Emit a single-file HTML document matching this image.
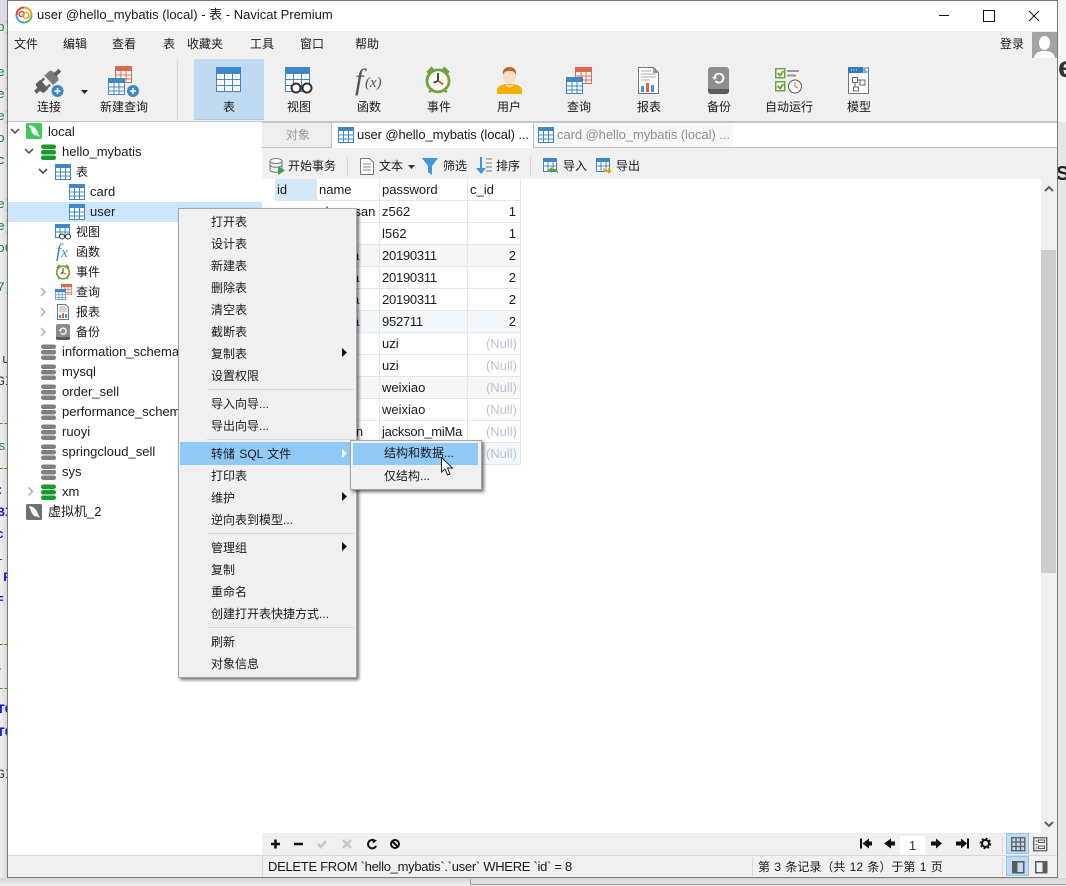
<!DOCTYPE html>
<html><head><meta charset="utf-8"><style>
html,body{margin:0;padding:0;width:1066px;height:886px;overflow:hidden;background:#e4e4e4}
body{position:relative;font:13px/20px "Liberation Sans","Noto Sans CJK SC",sans-serif;color:#1a1a1a}
.a,.t,svg.i{position:absolute}
.t{white-space:nowrap;line-height:20px}
.c{transform:translateX(-50%)}
.z{font-size:12px}
.m{font-size:12px;color:#1a1a1a}
.f{position:absolute;font:13px/16px "Liberation Mono",monospace;white-space:nowrap}
.b{font-weight:bold}
.g{position:absolute;border-right:1px solid #e6e6e6;border-bottom:1px solid #e6e6e6;box-sizing:border-box;height:22px;line-height:21px;padding-left:2px;overflow:hidden;white-space:nowrap}
.d{letter-spacing:-.25px}
.r{text-align:right;padding:0 4px 0 0}
.n{color:#bcc3d0;padding-right:3px}
.s{position:absolute;left:207px;width:147px;height:1px;background:#d8d8d8}
</style></head><body>
<svg width="0" height="0" style="position:absolute"><defs>
<symbol id="tb" viewBox="0 0 16 16"><rect x=".5" y=".5" width="15" height="15" fill="#fff" stroke="#3f87c6"/><rect width="16" height="4" fill="#3f87c6"/><path d="M0 8h16M0 12h16M5.500 4v12M10.500 4v12" stroke="#3f87c6"/></symbol>
<symbol id="db" viewBox="0 0 15 16"><rect x="0" y="0.500" width="15" height="4.500" rx="2.200" fill="currentColor"/><rect x="0" y="6" width="15" height="4.500" rx="2.200" fill="currentColor"/><rect x="0" y="11.500" width="15" height="4.500" rx="2.200" fill="currentColor"/></symbol>
<symbol id="tbl" viewBox="0 0 25 25"><rect x=".5" y=".5" width="24" height="24" fill="#fff" stroke="#3f87c6"/><rect width="25" height="7" fill="#3f87c6"/><path d="M0 12.500h25M0 18.500h25M8.500 7v18M16.500 7v18" stroke="#3f87c6"/></symbol>
<symbol id="sq" viewBox="0 0 17 17"><rect x=".5" y=".5" width="16" height="16" fill="#fff" stroke="#de6a4b"/><rect width="17" height="5" fill="#de6a4b"/><path d="M0 9h17M0 13h17M6 5v12M11 5v12" stroke="#de6a4b"/></symbol>
<symbol id="qr" viewBox="0 0 17 17"><rect x=".5" y=".5" width="16" height="16" fill="#fff" stroke="#3f87c6"/><rect width="17" height="5" fill="#3f87c6"/><path d="M0 9h17M0 13h17M6 5v12M11 5v12" stroke="#3f87c6"/></symbol>
<symbol id="ck" viewBox="0 0 16 16"><path d="M2 4l3-3M14 4l-3-3" stroke="#6fa43c" stroke-width="2"/><circle cx="8" cy="8.500" r="6.300" fill="#fdfbf3" stroke="#6fa43c" stroke-width="1.600"/><path d="M8 4v4.500l-2.500 1" stroke="#333" fill="none"/><path d="M8 8.500l3 2" stroke="#d9543b"/><path d="M3 15l2-2M13 15l-2-2" stroke="#6fa43c" stroke-width="1.500"/></symbol>
<symbol id="rp" viewBox="0 0 16 16"><path d="M2.500.5h8l3 3v12h-11z" fill="#fff" stroke="#777"/><path d="M4 3h6M4 5h8M4 7h8" stroke="#aaa"/><rect x="4" y="11" width="2" height="3" fill="#3f97dc"/><rect x="7" y="9" width="2" height="5" fill="#e8603c"/><rect x="10" y="10" width="2" height="4" fill="#3f97dc"/></symbol>
<symbol id="bk" viewBox="0 0 16 16"><rect x="1" width="14" height="16" rx="2" fill="#8c8c8c"/><path d="M1 13h14v1a2 2 0 0 1-2 2H3a2 2 0 0 1-2-2z" fill="#5b5b5b"/><path d="M5.200 6.500a3 3 0 1 1 .6 2.500" fill="none" stroke="#fff" stroke-width="1.300"/><path d="M3.500 6h3.500l-1.700 2z" fill="#fff"/></symbol>
<symbol id="dol" viewBox="0 0 16 16"><rect width="16" height="16" rx="1.500" fill="currentColor"/><path d="M3 2.500c3-.5 5 1 6.500 3 1.500 1.500 2.500 3 2.500 5 .5 1 1.500 2 2 3-1.500 0-2.500-.5-3.500-1.500-.5.500-1.500.5-2.500 0C6 10 5 7.500 4.500 5 3.500 4.500 3 3.500 3 2.500z" fill="#fff"/></symbol>
<symbol id="imp" viewBox="0 0 16 16"><rect x=".5" y=".5" width="13" height="13" fill="#fff" stroke="#3f87c6"/><rect width="14" height="4" fill="#3f87c6"/><path d="M0 8h14M5 4v10M10 4v10" stroke="#3f87c6"/></symbol>
</defs></svg>

<!-- background fragments left -->
<div class="a" style="left:0;top:0;width:7px;height:886px;background:linear-gradient(to right,#f1f1f1,#d9d9d9);overflow:hidden">
<div class="a" style="left:0;top:0;width:7px;height:24px;background:#dcdce8"></div>
<span class="f" style="left:-3px;top:20px;color:#1f7a3c">p]</span>
<span class="f" style="left:-3px;top:65px;color:#1f7a3c">e]</span>
<span class="f" style="left:-3px;top:87px;color:#1f7a3c">e]</span>
<span class="f" style="left:-3px;top:109px;color:#1f7a3c">e]</span>
<span class="f" style="left:-3px;top:131px;color:#1f7a3c">o:</span>
<span class="f" style="left:-3px;top:153px;color:#1f7a3c">c]</span>
<span class="f" style="left:-3px;top:197px;color:#1f7a3c">e]</span>
<span class="f" style="left:-3px;top:219px;color:#1f7a3c">e]</span>
<span class="f" style="left:-3px;top:241px;color:#1f7a3c">oC</span>
<span class="f" style="left:-3px;top:280px;color:#1f7a3c">7]</span>
<span class="f" style="left:2px;top:352px;color:#333">u</span>
<span class="f" style="left:-3px;top:374px;color:#333">GI</span>
<div class="a" style="left:0;top:423px;width:7px;border-top:1px dashed #3a8f3a"></div>
<span class="f" style="left:-2px;top:439px;color:#2a7f78">st</span>
<div class="a" style="left:0;top:468px;width:7px;border-top:1px dashed #3a8f3a"></div>
<span class="f b" style="left:-4px;top:483px;color:#1a1ae0">:</span>
<span class="f b" style="left:-3px;top:505px;color:#1a1ae0">BI</span>
<span class="f b" style="left:-4px;top:527px;color:#1a1ae0">c</span>
<span class="f" style="left:-5px;top:549px;color:#333">l</span>
<span class="f b" style="left:3px;top:570px;color:#1a1ae0">F</span>
<span class="f b" style="left:-4px;top:592px;color:#1a1ae0">=</span>
<div class="a" style="left:0;top:644px;width:7px;border-top:1px dashed #3a8f3a"></div>
<span class="f" style="left:-6px;top:660px;color:#2a7f78">s</span>
<div class="a" style="left:0;top:688px;width:7px;border-top:1px dashed #3a8f3a"></div>
<span class="f b" style="left:-3px;top:702px;color:#1a1ae0">TO</span>
<span class="f b" style="left:-3px;top:725px;color:#1a1ae0">TO</span>
<span class="f" style="left:-3px;top:767px;color:#333">GI</span>
</div>
<!-- right side -->
<div class="a" style="left:1058px;top:0;width:8px;height:886px;background:#e6e6e6;overflow:hidden">
<div class="a" style="left:0;top:0;width:8px;height:122px;background:#f6f6f6"></div>
<span class="a" style="left:0;top:50px;font:bold 30px/36px 'Liberation Sans',sans-serif;color:#333">e</span>
<span class="a" style="left:-2px;top:164px;font:bold 20px/20px 'Liberation Sans',sans-serif;color:#222">S</span>
</div>
<div class="a" style="left:0;top:878px;width:1066px;height:8px;background:linear-gradient(#d4d4d4,#f2f2f2)"></div>
<div class="a" style="left:470px;top:879px;width:596px;height:6px;border-left:1px solid #999;border-bottom:1px solid #999;box-sizing:border-box"></div>

<!-- window -->
<div class="a" id="w" style="left:7px;top:0;width:1051px;height:878px;background:#f0f0f0;border:1px solid #7a7a7a;box-sizing:border-box"></div>
<div class="a" style="left:8px;top:1px;width:1049px;height:30px;background:#fff"></div>
<!-- app logo -->
<svg class="i" style="left:15px;top:6px" width="18" height="18" viewBox="0 0 18 18"><path d="M9 1.500a7.500 7.500 0 0 1 7.500 7.500" fill="none" stroke="#e8a21f" stroke-width="2"/><path d="M9 1.500A7.500 7.500 0 0 0 1.500 9" fill="none" stroke="#dd4b39" stroke-width="2"/><path d="M1.500 9A7.500 7.500 0 0 0 9 16.500" fill="none" stroke="#3ea6e0" stroke-width="2"/><path d="M9 16.500A7.500 7.500 0 0 0 16.500 9" fill="none" stroke="#5cb85c" stroke-width="2"/><circle cx="6.500" cy="8" r="2.500" fill="none" stroke="#dd4b39" stroke-width="1.500"/><circle cx="11" cy="9.500" r="3" fill="none" stroke="#e8a21f" stroke-width="1.500"/></svg>
<span class="t" style="left:37px;top:5px">user @hello_mybatis (local) - 表 - Navicat Premium</span>
<!-- window controls -->
<div class="a" style="left:939px;top:15px;width:10px;height:1px;background:#111"></div>
<div class="a" style="left:983px;top:10px;width:10px;height:10px;border:1px solid #111"></div>
<svg class="i" style="left:1028px;top:10px" width="12" height="12"><path d="M1 1l10 10M11 1L1 11" stroke="#111" fill="none"/></svg>

<!-- menu -->
<span class="t m" style="left:14px;top:34px">文件</span><span class="t m" style="left:63px;top:34px">编辑</span><span class="t m" style="left:112px;top:34px">查看</span><span class="t m" style="left:163px;top:34px">表</span><span class="t m" style="left:187px;top:34px">收藏夹</span><span class="t m" style="left:250px;top:34px">工具</span><span class="t m" style="left:300px;top:34px">窗口</span><span class="t m" style="left:355px;top:34px">帮助</span><span class="t m" style="left:1000px;top:34px">登录</span>
<svg class="i" style="left:1032px;top:32px" width="25" height="26" viewBox="0 0 25 26"><rect width="25" height="26" fill="#a3a3a3"/><ellipse cx="12.500" cy="11" rx="5.500" ry="7" fill="#fff"/><path d="M2 26c1-6 6-7 10.500-7S22 20 23 26z" fill="#fff"/></svg>

<!-- toolbar -->
<div class="a" style="left:177px;top:60px;width:1px;height:60px;background:#d6d6d6"></div>
<div class="a" style="left:194px;top:59px;width:70px;height:61px;background:#bfdaf1;border-bottom:1px solid #a9cde9;box-sizing:border-box"></div>
<!-- plug -->
<svg class="i" style="left:32px;top:66px" width="34" height="32" viewBox="0 0 34 32"><g transform="rotate(-42 16 15)" fill="#606060"><rect x="-1" y="13" width="7" height="4"/><path d="M5 9h6v12H5c-2-1-2-11 0-12z"/><rect x="11" y="9.500" width="4" height="2.300"/><rect x="11" y="18" width="4" height="2.300"/><path d="M17 8.500h7c3 1 3 12 0 13h-7z" fill="#7b7b7b"/><rect x="25" y="13" width="7" height="4"/></g><circle cx="25.500" cy="25" r="6" fill="#3f87c6"/><path d="M22.500 25h6M25.500 22v6" stroke="#fff" stroke-width="1.500"/></svg>
<svg class="i" style="left:81px;top:90px" width="7" height="4"><path d="M0 0h7L3.500 4z" fill="#222"/></svg>
<!-- new query -->
<svg class="i" style="left:108px;top:66px" width="32" height="32"><use href="#sq" x="7" y="0" width="17" height="17"/><use href="#qr" x="0" y="12" width="17" height="17"/><circle cx="25" cy="25" r="6" fill="#3f87c6"/><path d="M22 25h6M25 22v6" stroke="#fff" stroke-width="1.500"/></svg>
<svg class="i" style="left:216px;top:67px" width="26" height="26"><use href="#tbl" width="25" height="25"/></svg>
<!-- view -->
<svg class="i" style="left:285px;top:67px" width="29" height="28" viewBox="0 0 29 28"><use href="#tbl" width="25" height="25"/><circle cx="11" cy="21" r="4.500" fill="#fff" stroke="#333" stroke-width="2"/><circle cx="22" cy="21" r="4.500" fill="#fff" stroke="#333" stroke-width="2"/><path d="M15 20h3" stroke="#333" stroke-width="2"/></svg>
<span class="a" style="left:355px;top:63px;font:italic 30px/34px 'Liberation Serif',serif;color:#555">f</span><span class="a" style="left:365px;top:74px;font:italic 15px/18px 'Liberation Serif',serif;color:#555">(x)</span>
<svg class="i" style="left:424px;top:66px" width="28" height="28"><use href="#ck" width="28" height="28"/></svg>
<!-- user -->
<svg class="i" style="left:497px;top:66px" width="25" height="28" viewBox="0 0 25 28"><path d="M0 28v-4c0-4 5-5 8-6h9c3 1 8 2 8 6v4z" fill="#f4b000"/><ellipse cx="12.500" cy="9.500" rx="6.500" ry="8.500" fill="#f9dcc6"/><path d="M6 9C5 3 9 1 12.500 1S20 3 19 9c-1-3-3-4-6.500-4S7 6 6 9z" fill="#b96a31"/><path d="M9 17c1 3 6 3 7 0v3c-2 2-5 2-7 0z" fill="#f0cdb3"/></svg>
<!-- query -->
<svg class="i" style="left:566px;top:67px" width="27" height="27"><use href="#sq" x="9" y="0" width="17" height="17"/><use href="#qr" x="0" y="10" width="17" height="17"/></svg>
<svg class="i" style="left:638px;top:67px" width="21" height="27" viewBox="0 0 21 27"><path d="M.5.500h15l5 5v21H.5z" fill="#fff" stroke="#777"/><path d="M15 .5l5.500 5.500H15z" fill="#999"/><path d="M3 4h10M3 7h15M3 10h15M3 13h9" stroke="#aaa"/><rect x="3" y="19" width="3" height="6" fill="#3f97dc"/><rect x="8" y="16" width="3" height="9" fill="#e8603c"/><rect x="13" y="18" width="3" height="7" fill="#3f97dc"/></svg>
<svg class="i" style="left:708px;top:67px" width="21" height="27" viewBox="0 0 21 27"><rect width="21" height="27" rx="3" fill="#8e8e8e"/><path d="M0 22h21v2a3 3 0 0 1-3 3H3a3 3 0 0 1-3-3z" fill="#5b5b5b"/><path d="M6.500 10.500a4.500 4.500 0 1 1 1 3.500" fill="none" stroke="#fff" stroke-width="1.800"/><path d="M4 10h5l-2.500 3z" fill="#fff"/></svg>
<!-- autorun -->
<svg class="i" style="left:775px;top:68px" width="29" height="27" viewBox="0 0 29 27"><rect x=".75" y=".75" width="9" height="9" fill="#fff" stroke="#6fa43c" stroke-width="1.500"/><path d="M2.500 5l2.500 2.500L8.500 3" fill="none" stroke="#6fa43c" stroke-width="2"/><rect x=".75" y="13.750" width="9" height="9" fill="#fff" stroke="#6fa43c" stroke-width="1.500"/><path d="M2.500 18l2.500 2.500L8.500 16" fill="none" stroke="#6fa43c" stroke-width="2"/><path d="M12 3h12M12 7.500h9" stroke="#999" stroke-width="2"/><circle cx="20" cy="18.500" r="6.500" fill="#fff" stroke="#555"/><path d="M20 14v4.500l3 1.500" fill="none" stroke="#e8603c"/></svg>
<!-- model -->
<svg class="i" style="left:848px;top:67px" width="21" height="27" viewBox="0 0 21 27"><path d="M.5 1h20v25.500H.5z" fill="#fff" stroke="#777"/><path d="M0 0h15l6 6H0z" fill="#2f7ab8"/><path d="M15 0l6 6h-6z" fill="#7fb6e0"/><path d="M3 3h1M5.500 3h1M8 3h1" stroke="#fff"/><path d="M4.500 10.500h5v5h-5zM12 13h5v5h-5zM5.500 20h5v4h-5z" fill="none" stroke="#666"/><path d="M7 15.500V20M9.500 13H12" stroke="#666"/></svg>
<span class="t c z" style="left:49px;top:97px">连接</span>
<span class="t c z" style="left:124px;top:97px">新建查询</span>
<span class="t c z" style="left:229px;top:97px">表</span>
<span class="t c z" style="left:299px;top:97px">视图</span>
<span class="t c z" style="left:369px;top:97px">函数</span>
<span class="t c z" style="left:439px;top:97px">事件</span>
<span class="t c z" style="left:509px;top:97px">用户</span>
<span class="t c z" style="left:579px;top:97px">查询</span>
<span class="t c z" style="left:649px;top:97px">报表</span>
<span class="t c z" style="left:719px;top:97px">备份</span>
<span class="t c z" style="left:789px;top:97px">自动运行</span>
<span class="t c z" style="left:859px;top:97px">模型</span>
<div class="a" style="left:8px;top:121px;width:1049px;height:2px;background:#c6c6c6"></div>

<!-- tree -->
<div class="a" style="left:8px;top:122px;width:254px;height:733px;background:#fff"></div>
<div class="a" style="left:8px;top:202px;width:254px;height:20px;background:#cce6fb"></div>
<svg class="i" style="left:0;top:122px" width="110" height="240" viewBox="0 0 110 240" fill="none" stroke="#555" stroke-width="1.600"><path d="M11 7l4 4 4-4M25 27l4 4 4-4M39 47l4 4 4-4"/><g stroke="#b5b5b5"><path d="M41 166l4 4-4 4M41 186l4 4-4 4M41 206l4 4-4 4"/></g></svg>
<svg class="i" style="left:26px;top:123px;color:#3fca5a" width="16" height="16"><use href="#dol" width="16" height="16"/></svg>
<svg class="i" style="left:41px;top:144px;color:#179a2d" width="15" height="16"><use href="#db" width="15" height="16"/></svg>
<svg class="i" style="left:55px;top:164px" width="16" height="16"><use href="#tb" width="16" height="16"/></svg>
<svg class="i" style="left:69px;top:184px" width="16" height="16"><use href="#tb" width="16" height="16"/></svg>
<svg class="i" style="left:69px;top:204px" width="16" height="16"><use href="#tb" width="16" height="16"/></svg>
<svg class="i" style="left:55px;top:224px" width="17" height="16" viewBox="0 0 17 16"><rect x=".5" y=".5" width="14" height="13" fill="#fff" stroke="#3f87c6"/><rect width="15" height="4" fill="#3f87c6"/><path d="M0 8h15M5 4v10M10 4v10" stroke="#3f87c6"/><circle cx="7" cy="12.500" r="2.500" fill="#fff" stroke="#333"/><circle cx="13" cy="12.500" r="2.500" fill="#fff" stroke="#333"/></svg>
<span class="a" style="left:56px;top:242px;font:italic 19px/20px 'Liberation Serif',serif;color:#3f87c6">f<span style="font-size:15px">x</span></span>
<svg class="i" style="left:55px;top:264px" width="16" height="16"><use href="#ck" width="16" height="16"/></svg>
<svg class="i" style="left:55px;top:284px" width="17" height="17"><use href="#sq" x="6" y="0" width="11" height="11"/><use href="#qr" x="0" y="5" width="11" height="11"/></svg>
<svg class="i" style="left:55px;top:304px" width="16" height="16"><use href="#rp" width="16" height="16"/></svg>
<svg class="i" style="left:55px;top:324px" width="16" height="16"><use href="#bk" width="16" height="16"/></svg>
<svg class="i" style="left:41px;top:344px;color:#808080" width="15" height="16"><use href="#db" width="15" height="16"/></svg>
<svg class="i" style="left:41px;top:364px;color:#808080" width="15" height="16"><use href="#db" width="15" height="16"/></svg>
<svg class="i" style="left:41px;top:384px;color:#808080" width="15" height="16"><use href="#db" width="15" height="16"/></svg>
<svg class="i" style="left:41px;top:404px;color:#808080" width="15" height="16"><use href="#db" width="15" height="16"/></svg>
<svg class="i" style="left:41px;top:424px;color:#808080" width="15" height="16"><use href="#db" width="15" height="16"/></svg>
<svg class="i" style="left:41px;top:444px;color:#808080" width="15" height="16"><use href="#db" width="15" height="16"/></svg>
<svg class="i" style="left:41px;top:464px;color:#808080" width="15" height="16"><use href="#db" width="15" height="16"/></svg>
<svg class="i" style="left:27px;top:486px" width="8" height="12"><path d="M1.500 1.500l4 4-4 4" fill="none" stroke="#b5b5b5" stroke-width="1.600"/></svg>
<svg class="i" style="left:41px;top:484px;color:#179a2d" width="15" height="16"><use href="#db" width="15" height="16"/></svg>
<svg class="i" style="left:26px;top:504px;color:#707070" width="16" height="16"><use href="#dol" width="16" height="16"/></svg>
<span class="t" style="left:48px;top:122px">local</span>
<span class="t" style="left:62px;top:142px">hello_mybatis</span>
<span class="t z" style="left:76px;top:162px">表</span>
<span class="t" style="left:90px;top:182px">card</span>
<span class="t" style="left:90px;top:202px">user</span>
<span class="t z" style="left:76px;top:222px">视图</span>
<span class="t z" style="left:76px;top:242px">函数</span>
<span class="t z" style="left:76px;top:262px">事件</span>
<span class="t z" style="left:76px;top:282px">查询</span>
<span class="t z" style="left:76px;top:302px">报表</span>
<span class="t z" style="left:76px;top:322px">备份</span>
<span class="t" style="left:62px;top:342px">information_schema</span>
<span class="t" style="left:62px;top:362px">mysql</span>
<span class="t" style="left:62px;top:382px">order_sell</span>
<span class="t" style="left:62px;top:402px">performance_schema</span>
<span class="t" style="left:62px;top:422px">ruoyi</span>
<span class="t" style="left:62px;top:442px">springcloud_sell</span>
<span class="t" style="left:62px;top:462px">sys</span>
<span class="t" style="left:62px;top:482px">xm</span>
<span class="t" style="left:48px;top:502px">虚拟机_2</span>

<!-- tabs -->
<div class="a" style="left:262px;top:123px;width:795px;height:25px;background:#fff;border-bottom:1px solid #c2c2c2;box-sizing:border-box"></div>
<div class="a" style="left:262px;top:123px;width:69px;height:24px;background:#eee"></div>
<div class="a" style="left:331px;top:123px;width:203px;height:25px;background:#fff;border-left:1px solid #c2c2c2;border-right:1px solid #c2c2c2;box-sizing:border-box"></div>
<div class="a" style="left:534px;top:123px;width:199px;height:24px;background:#f7f7f7"></div>
<span class="t z" style="left:286px;top:125px;color:#9a9a9a">对象</span>
<svg class="i" style="left:338px;top:127px" width="16" height="16"><use href="#tb" width="16" height="16"/></svg>
<span class="t" style="left:357px;top:125px;letter-spacing:-.1px">user @hello_mybatis (local) ...</span>
<svg class="i" style="left:538px;top:127px" width="16" height="16"><use href="#tb" width="16" height="16"/></svg>
<span class="t" style="left:557px;top:125px;color:#8f8f8f;letter-spacing:-.07px">card @hello_mybatis (local) ...</span>

<!-- toolbar 2 -->
<svg class="i" style="left:269px;top:158px" width="17" height="17" viewBox="0 0 17 17"><ellipse cx="7" cy="3" rx="6" ry="2.500" fill="#fff" stroke="#777"/><path d="M1 3v9c0 3 12 3 12 0V3M1 7c0 3 12 3 12 0" fill="none" stroke="#777"/><path d="M9 8l7 4.500-7 4.500z" fill="#3aa655"/></svg>
<span class="t z" style="left:288px;top:156px">开始事务</span>
<div class="a" style="left:347px;top:157px;width:1px;height:19px;background:#d6d6d6"></div>
<svg class="i" style="left:360px;top:158px" width="14" height="17" viewBox="0 0 14 17"><path d="M.5.500h9l4 4v12H.5z" fill="#fff" stroke="#777"/><path d="M3 6h8M3 9h8M3 12h8" stroke="#888"/></svg>
<span class="t z" style="left:379px;top:156px">文本</span>
<svg class="i" style="left:408px;top:165px" width="7" height="4"><path d="M0 0h7L3.500 4z" fill="#333"/></svg>
<svg class="i" style="left:422px;top:158px" width="16" height="17" viewBox="0 0 16 17"><path d="M0 0h16L10 8v9L6 14V8z" fill="#3c97dc"/></svg>
<span class="t z" style="left:443px;top:156px">筛选</span>
<svg class="i" style="left:476px;top:157px" width="17" height="18" viewBox="0 0 17 18"><path d="M5 0v12" stroke="#3c97dc" stroke-width="2"/><path d="M0 11h10l-5 6z" fill="#3c97dc"/><path d="M10 2h6M10 6h6M10 10h6M10 14h6" stroke="#777"/></svg>
<span class="t z" style="left:496px;top:156px">排序</span>
<div class="a" style="left:530px;top:157px;width:1px;height:19px;background:#d6d6d6"></div>
<svg class="i" style="left:543px;top:158px" width="17" height="17" viewBox="0 0 17 17"><use href="#imp" width="16" height="16"/><path d="M15 15c0-3-2-5-6-4v-2l-4 3 4 3v-2c3 0 4 1 6 2z" fill="#5fa53a"/></svg>
<span class="t z" style="left:563px;top:156px">导入</span>
<svg class="i" style="left:596px;top:158px" width="17" height="17" viewBox="0 0 17 17"><use href="#imp" width="16" height="16"/><path d="M7 10c0 3 2 5 5 4v2l4-3-4-3v2c-2 0-3-1-5-2z" fill="#f59a12"/></svg>
<span class="t z" style="left:616px;top:156px">导出</span>

<!-- data grid -->
<div class="a" style="left:262px;top:179px;width:779px;height:654px;background:#fff"></div>
<div class="a" id="grid" style="left:0;top:0">
<div class="g" style="left:275px;top:179px;width:42px;background:#d5e8f8">id</div><div class="g" style="left:317px;top:179px;width:63px">name</div><div class="g" style="left:380px;top:179px;width:88px">password</div><div class="g" style="left:468px;top:179px;width:53px">c_id</div>
<div class="a" style="left:275px;top:245px;width:246px;height:21px;background:#f7f7f7"></div>
<div class="a" style="left:275px;top:311px;width:246px;height:21px;background:#f3f8fc"></div>
<div class="a" style="left:275px;top:377px;width:246px;height:21px;background:#f7f7f7"></div>
<div class="a" style="left:275px;top:443px;width:246px;height:21px;background:#f3f8fc"></div>
<div class="g" style="left:317px;top:201px;width:63px">zhangsan</div><div class="g" style="left:380px;top:201px;width:88px">z562</div><div class="g r" style="left:468px;top:201px;width:53px">1</div>
<div class="g" style="left:317px;top:223px;width:63px"></div><div class="g" style="left:380px;top:223px;width:88px">l562</div><div class="g r" style="left:468px;top:223px;width:53px">1</div>
<div class="g" style="left:317px;top:245px;width:63px;padding-left:35px">a</div><div class="g d" style="left:380px;top:245px;width:88px">20190311</div><div class="g r" style="left:468px;top:245px;width:53px">2</div>
<div class="g" style="left:317px;top:267px;width:63px;padding-left:35px">a</div><div class="g d" style="left:380px;top:267px;width:88px">20190311</div><div class="g r" style="left:468px;top:267px;width:53px">2</div>
<div class="g" style="left:317px;top:289px;width:63px;padding-left:35px">a</div><div class="g d" style="left:380px;top:289px;width:88px">20190311</div><div class="g r" style="left:468px;top:289px;width:53px">2</div>
<div class="g" style="left:317px;top:311px;width:63px;padding-left:35px">a</div><div class="g d" style="left:380px;top:311px;width:88px">952711</div><div class="g r" style="left:468px;top:311px;width:53px">2</div>
<div class="g" style="left:317px;top:333px;width:63px"></div><div class="g" style="left:380px;top:333px;width:88px">uzi</div><div class="g r n" style="left:468px;top:333px;width:53px">(Null)</div>
<div class="g" style="left:317px;top:355px;width:63px"></div><div class="g" style="left:380px;top:355px;width:88px">uzi</div><div class="g r n" style="left:468px;top:355px;width:53px">(Null)</div>
<div class="g" style="left:317px;top:377px;width:63px"></div><div class="g" style="left:380px;top:377px;width:88px">weixiao</div><div class="g r n" style="left:468px;top:377px;width:53px">(Null)</div>
<div class="g" style="left:317px;top:399px;width:63px"></div><div class="g" style="left:380px;top:399px;width:88px">weixiao</div><div class="g r n" style="left:468px;top:399px;width:53px">(Null)</div>
<div class="g" style="left:317px;top:421px;width:63px">jackson</div><div class="g d" style="left:380px;top:421px;width:88px">jackson_miMa</div><div class="g r n" style="left:468px;top:421px;width:53px">(Null)</div>
<div class="g" style="left:317px;top:443px;width:63px"></div><div class="g" style="left:380px;top:443px;width:88px"></div><div class="g r n" style="left:468px;top:443px;width:53px">(Null)</div>
</div>

<!-- scrollbar -->
<div class="a" style="left:1041px;top:179px;width:16px;height:654px;background:#f0f0f0"></div>
<div class="a" style="left:1041px;top:250px;width:15px;height:323px;background:#cdcdcd"></div>
<svg class="i" style="left:1044px;top:185px" width="10" height="7"><path d="M1 6l4-4 4 4" fill="none" stroke="#606060" stroke-width="2"/></svg>
<svg class="i" style="left:1044px;top:821px" width="10" height="7"><path d="M1 1l4 4 4-4" fill="none" stroke="#606060" stroke-width="2"/></svg>

<!-- bottom toolbar -->
<svg class="i" style="left:268px;top:837px" width="140" height="14" fill="none"><path d="M3 7h9M7.500 2.500v9M26 7h9" stroke="#111" stroke-width="2.600"/><path d="M50 7l3 3 5-6" stroke="#c7c7c7" stroke-width="2.600"/><path d="M75 3l8 8M83 3l-8 8" stroke="#c7c7c7" stroke-width="2.600"/><path d="M107 4a4.200 4.200 0 1 0 1 5" stroke="#111" stroke-width="2"/><path d="M104 1.500l5 2-4 3z" fill="#111"/><circle cx="127" cy="7" r="4" stroke="#111" stroke-width="2"/><path d="M124 4l6 6" stroke="#111" stroke-width="2"/></svg>
<svg class="i" style="left:858px;top:836px" width="140" height="16" viewBox="0 0 140 16"><rect x="2" y="2.500" width="2" height="10" fill="#111"/><path d="M11 2.500v10L4.500 7.500z" fill="#111"/><rect x="10" y="5.500" width="4" height="4" fill="#111"/><path d="M33 2.500v10l-7-5z" fill="#111"/><rect x="32" y="5.500" width="5" height="4" fill="#111"/><path d="M78 2.500v10l6-5z" fill="#111"/><rect x="73" y="5.500" width="5" height="4" fill="#111"/><path d="M103 2.500v10l6-5z" fill="#111"/><rect x="98" y="5.500" width="5" height="4" fill="#111"/><rect x="109" y="2.500" width="2" height="10" fill="#111"/><circle cx="127.500" cy="7.500" r="3.500" fill="none" stroke="#111" stroke-width="2"/><circle cx="127.500" cy="7.500" r="5" fill="none" stroke="#111" stroke-width="1.500" stroke-dasharray="2 1.900"/></svg>
<div class="a" style="left:900px;top:836px;width:25px;height:19px;background:#fff;text-align:center;line-height:20px;color:#333">1</div>
<div class="a" style="left:1006px;top:833px;width:23px;height:21px;background:#bfdaf1;border:1px solid #8cc6f4;box-sizing:border-box"></div>
<svg class="i" style="left:1011px;top:837px" width="15" height="15"><path d="M.75.75h13v13h-13zM.75 5h13M.75 9.500h13M5 .75v13M9.500.75v13" fill="none" stroke="#5a5a5a" stroke-width="1.300"/></svg>
<svg class="i" style="left:1033px;top:837px" width="15" height="15"><path d="M.75 .75h13v13h-13z" fill="none" stroke="#5a5a5a" stroke-width="1.300"/><path d="M2.500 4h2M2.500 7.500h2M2.500 11h2M5.500 3h6v2.500h-6zM5.500 9h6v2.500h-6z" fill="none" stroke="#5a5a5a"/></svg>
<div class="a" style="left:8px;top:855px;width:1049px;height:1px;background:#d8d8d8"></div>
<div class="a" style="left:1002px;top:836px;width:1px;height:18px;background:#d8d8d8"></div>
<!-- status -->
<div class="a" style="left:262px;top:856px;width:1px;height:21px;background:#d8d8d8"></div>
<span class="t" style="left:268px;top:857px;letter-spacing:-.29px">DELETE FROM `hello_mybatis`.`user` WHERE `id` = 8</span>
<div class="a" style="left:752px;top:857px;width:1px;height:19px;background:#d8d8d8"></div>
<span class="t z" style="left:758px;top:857px;word-spacing:1px">第 3 条记录（共 12 条）于第 1 页</span>
<div class="a" style="left:1002px;top:857px;width:1px;height:19px;background:#d8d8d8"></div>
<div class="a" style="left:1006px;top:856px;width:23px;height:20px;background:#bfdaf1;border:1px solid #8cc6f4;box-sizing:border-box"></div>
<svg class="i" style="left:1012px;top:861px" width="13" height="13"><rect x=".75" y=".75" width="11" height="11" fill="none" stroke="#5a5a5a" stroke-width="1.500"/><rect x="1" y="1" width="4.500" height="11" fill="#5a5a5a"/></svg>
<svg class="i" style="left:1035px;top:861px" width="13" height="13"><rect x=".75" y=".75" width="11" height="11" fill="none" stroke="#5a5a5a" stroke-width="1.500"/><rect x="7.500" y="1" width="4.500" height="11" fill="#5a5a5a"/></svg>

<!-- context menu -->
<div class="a" style="left:178px;top:208px;width:179px;height:470px;background:#f0f0f0;border:1px solid #a5a5a5;box-sizing:border-box;box-shadow:2px 2px 3px rgba(0,0,0,.55)"></div>
<div class="a" style="left:180px;top:442px;width:171px;height:23px;background:#90c8f6"></div>
<span class="t z" style="left:211px;top:212px">打开表</span>
<span class="t z" style="left:211px;top:234px">设计表</span>
<span class="t z" style="left:211px;top:256px">新建表</span>
<span class="t z" style="left:211px;top:278px">删除表</span>
<span class="t z" style="left:211px;top:300px">清空表</span>
<span class="t z" style="left:211px;top:322px">截断表</span>
<span class="t z" style="left:211px;top:344px">复制表</span>
<span class="t z" style="left:211px;top:366px">设置权限</span>
<div class="s" style="top:389px"></div>
<span class="t z" style="left:211px;top:394px">导入向导...</span>
<span class="t z" style="left:211px;top:416px">导出向导...</span>
<div class="s" style="top:439px"></div>
<span class="t z" style="left:211px;top:444px;word-spacing:1px">转储 SQL 文件</span>
<span class="t z" style="left:211px;top:466px">打印表</span>
<span class="t z" style="left:211px;top:488px">维护</span>
<span class="t z" style="left:211px;top:510px">逆向表到模型...</span>
<div class="s" style="top:533px"></div>
<span class="t z" style="left:211px;top:538px">管理组</span>
<span class="t z" style="left:211px;top:560px">复制</span>
<span class="t z" style="left:211px;top:582px">重命名</span>
<span class="t z" style="left:211px;top:604px">创建打开表快捷方式...</span>
<div class="s" style="top:627px"></div>
<span class="t z" style="left:211px;top:632px">刷新</span>
<span class="t z" style="left:211px;top:654px">对象信息</span>
<svg class="i" style="left:342px;top:348px" width="5" height="9"><path d="M0 0l5 4.500L0 9z" fill="#111"/></svg>
<svg class="i" style="left:342px;top:449px" width="5" height="9"><path d="M0 0l5 4.500L0 9z" fill="#fff"/></svg>
<svg class="i" style="left:342px;top:492px" width="5" height="9"><path d="M0 0l5 4.500L0 9z" fill="#111"/></svg>
<svg class="i" style="left:342px;top:542px" width="5" height="9"><path d="M0 0l5 4.500L0 9z" fill="#111"/></svg>

<!-- submenu -->
<div class="a" style="left:350px;top:440px;width:132px;height:50px;background:#f0f0f0;border:1px solid #a5a5a5;box-sizing:border-box;box-shadow:2px 2px 3px rgba(0,0,0,.55)"></div>
<div class="a" style="left:353px;top:443px;width:125px;height:22px;background:#90c8f6"></div>
<span class="t z" style="left:384px;top:443px">结构和数据...</span>
<span class="t z" style="left:384px;top:466px">仅结构...</span>
<!-- cursor -->
<svg class="i" style="left:441px;top:457px" width="14" height="19" viewBox="0 0 14 19"><path d="M.5.500v14.500l3.500-3 2.500 6 2.500-1-2.500-6h5z" fill="#fff" stroke="#222"/></svg>
</body></html>
